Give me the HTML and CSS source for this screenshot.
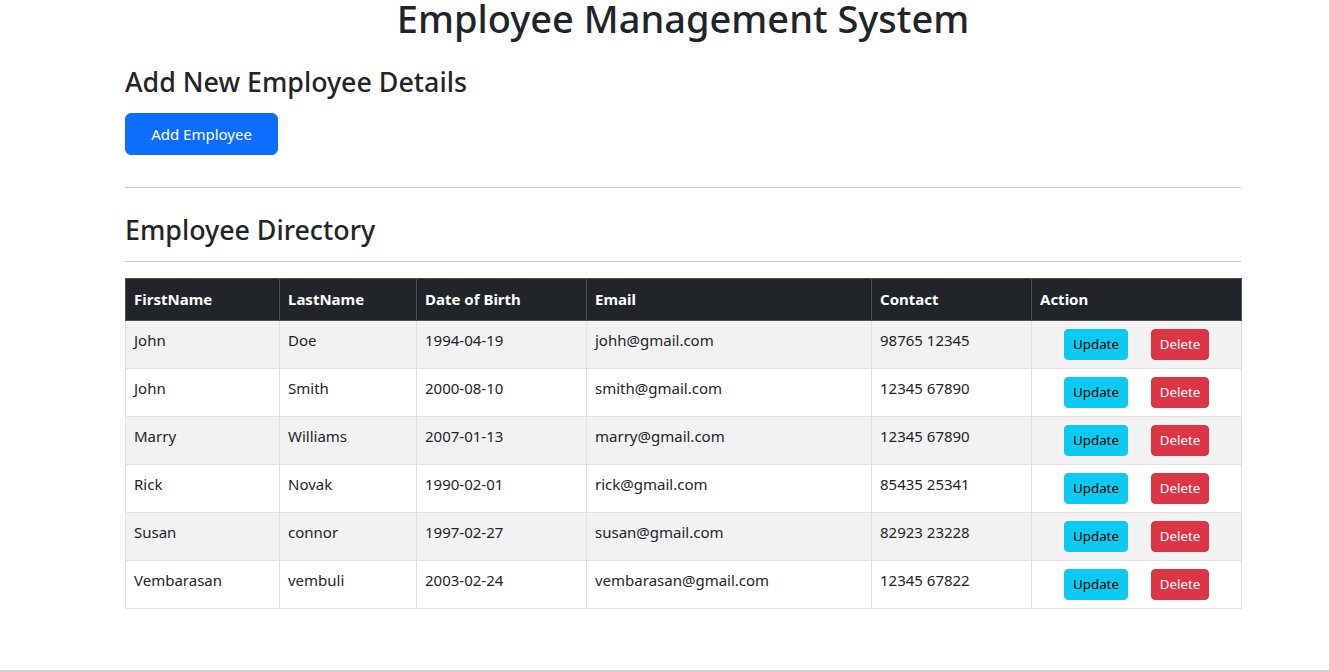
FILE: index.html
```html
<!DOCTYPE html>
<html lang="en">
<head>
<meta charset="utf-8">
<title>Employee Management System</title>
<link rel="stylesheet" href="styles.css">
</head>
<body>
<div class="container">
  <h1 class="title">Employee Management System</h1>
  <h2 class="section-title first">Add New Employee Details</h2>
  <button class="btn btn-primary">Add Employee</button>
  <hr class="rule rule-top">
  <h2 class="section-title second">Employee Directory</h2>
  <hr class="rule rule-bottom">
  <table class="emp-table">
    <colgroup>
      <col class="c1"><col class="c2"><col class="c3"><col class="c4"><col class="c5"><col class="c6">
    </colgroup>
    <thead>
      <tr>
        <th>FirstName</th><th>LastName</th><th>Date of Birth</th><th>Email</th><th>Contact</th><th>Action</th>
      </tr>
    </thead>
    <tbody>
      <tr>
        <td>John</td><td>Doe</td><td>1994-04-19</td><td>johh@gmail.com</td><td>98765 12345</td>
        <td class="action"><div class="actions"><button class="btn-sm btn-info">Update</button><button class="btn-sm btn-danger">Delete</button></div></td>
      </tr>
      <tr>
        <td>John</td><td>Smith</td><td>2000-08-10</td><td>smith@gmail.com</td><td>12345 67890</td>
        <td class="action"><div class="actions"><button class="btn-sm btn-info">Update</button><button class="btn-sm btn-danger">Delete</button></div></td>
      </tr>
      <tr>
        <td>Marry</td><td>Williams</td><td>2007-01-13</td><td>marry@gmail.com</td><td>12345 67890</td>
        <td class="action"><div class="actions"><button class="btn-sm btn-info">Update</button><button class="btn-sm btn-danger">Delete</button></div></td>
      </tr>
      <tr>
        <td>Rick</td><td>Novak</td><td>1990-02-01</td><td>rick@gmail.com</td><td>85435 25341</td>
        <td class="action"><div class="actions"><button class="btn-sm btn-info">Update</button><button class="btn-sm btn-danger">Delete</button></div></td>
      </tr>
      <tr>
        <td>Susan</td><td>connor</td><td>1997-02-27</td><td>susan@gmail.com</td><td>82923 23228</td>
        <td class="action"><div class="actions"><button class="btn-sm btn-info">Update</button><button class="btn-sm btn-danger">Delete</button></div></td>
      </tr>
      <tr>
        <td>Vembarasan</td><td>vembuli</td><td>2003-02-24</td><td>vembarasan@gmail.com</td><td>12345 67822</td>
        <td class="action"><div class="actions"><button class="btn-sm btn-info">Update</button><button class="btn-sm btn-danger">Delete</button></div></td>
      </tr>
    </tbody>
  </table>
</div>
<div class="scrollbar"></div>
</body>
</html>
```

FILE: styles.css
```css
* { box-sizing: border-box; }

body {
  margin: 0;
  background: #fff;
  color: #212529;
  font-family: "Noto Sans", "Open Sans", sans-serif;
  font-size: 15px;
  line-height: 1.5;
}

.container {
  width: 1116px;
  margin-left: 125px;
}

.title {
  margin: 0;
  font-size: 38px;
  font-weight: 500;
  line-height: 36px;
  text-align: center;
}

.section-title {
  margin: 0;
  font-size: 26.8px;
  font-weight: 500;
  line-height: 32px;
}

.section-title.first { margin-top: 30px; margin-bottom: 15px; }
.section-title.second { margin-top: 26px; margin-bottom: 15px; }

.btn {
  display: block;
  width: 153px;
  height: 42px;
  padding: 8px 0;
  border: 1px solid #0d6efd;
  border-radius: 6px;
  font-family: inherit;
  font-size: 15px;
  line-height: 24px;
  text-align: center;
  cursor: pointer;
}

.btn-primary { background: #0d6efd; color: #fff; }

.rule {
  margin: 0;
  border: 0;
  border-top: 1px solid #c8c9ca;
}

.rule-top { margin-top: 32px; }
.rule-bottom { margin-bottom: 16px; }

.emp-table {
  width: 1116px;
  border-collapse: collapse;
  table-layout: fixed;
  vertical-align: top;
}

.c1 { width: 154px; }
.c2 { width: 137px; }
.c3 { width: 170px; }
.c4 { width: 285px; }
.c5 { width: 160px; }
.c6 { width: 210px; }

.emp-table th {
  background: #212529;
  color: #fff;
  font-weight: 700;
  text-align: left;
  padding: 8px 8px 9px;
  border: 1px solid #4a4f54;
  line-height: 24px;
  vertical-align: top;
}

.emp-table td {
  padding: 7px 8px 9px;
  border: 1px solid #dee2e6;
  line-height: 24px;
  vertical-align: top;
  height: 48px;
}

.emp-table td.action { padding-top: 8px; padding-bottom: 8px; }

.emp-table tbody tr:nth-child(odd) td { background: #f2f2f2; }

.emp-table td.action { border-left-color: #d3d6d9; }

.actions {
  display: flex;
  padding-left: 24px;
}

.btn-sm {
  height: 31px;
  padding: 4px 0;
  border: 1px solid transparent;
  border-radius: 4px;
  font-family: inherit;
  font-size: 13.3px;
  line-height: 21px;
  text-align: center;
  cursor: pointer;
}

.btn-info { background: #0dcaf0; border-color: #0dcaf0; color: #000; width: 64px; }
.btn-danger { background: #dc3545; border-color: #dc3545; color: #fff; width: 58px; margin-left: 23px; }

.scrollbar {
  position: fixed;
  left: 0;
  right: 0;
  bottom: 0;
  height: 1px;
  background: #d2d2d2;
}
```
